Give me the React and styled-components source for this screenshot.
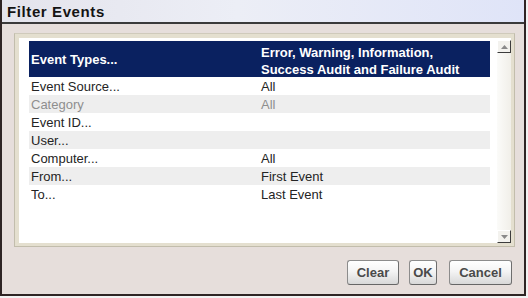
import React from 'react';
import styled, { createGlobalStyle } from 'styled-components';

const GlobalStyle = createGlobalStyle`
  html, body {
    margin: 0;
    padding: 0;
    background: #f2f2f2;
  }
  body {
    font-family: "Liberation Sans", Arial, sans-serif;
  }
`;

const rows = [
  { label: 'Event Source...', value: 'All' },
  { label: 'Category', value: 'All', disabled: true },
  { label: 'Event ID...', value: '' },
  { label: 'User...', value: '' },
  { label: 'Computer...', value: 'All' },
  { label: 'From...', value: 'First Event' },
  { label: 'To...', value: 'Last Event' },
];

const Dialog = styled.div`
  width: 526px;
  height: 296px;
  box-sizing: border-box;
  display: flex;
  flex-direction: column;
  background: #e6dedb;
  border-left: 2px solid #2e2424;
  border-right: 2px solid #2e2424;
  border-bottom: 2px solid #2e2424;
`;

const TitleBar = styled.div`
  height: 22px;
  line-height: 24px;
  padding-left: 5px;
  border-bottom: 2px solid #3a3a3a;
  background: linear-gradient(to right, #e4e4ec 0%, #eceef6 45%, #dfe4f8 100%);
  font-weight: bold;
  font-size: 15px;
  letter-spacing: 0.6px;
  color: #141414;
`;

const Body = styled.div`
  flex: 1;
  display: flex;
  flex-direction: column;
  padding: 9px 9px 0 12px;
`;

const Panel = styled.div`
  height: 214px;
  box-sizing: border-box;
  border: 1px solid #c2bdac;
  border-top-color: #cfcabb;
  background: #e4dfcf;
  padding: 4px 3px 3px 4px;
  display: flex;
`;

const Inner = styled.div`
  flex: 1;
  background: #ffffff;
  display: flex;
  padding: 3px 0 0 10px;
`;

const Table = styled.div`
  width: 461px;
  display: flex;
  flex-direction: column;
`;

const Row = styled.div`
  display: grid;
  grid-template-columns: 230px 1fr;
  height: 18px;
  line-height: 19px;
  font-size: 13px;
  color: ${p => (p.$muted ? '#8e8e8e' : '#242424')};
  background: ${p => (p.$shade ? '#eeeeee' : 'transparent')};
`;

const HeadRow = styled.div`
  display: grid;
  grid-template-columns: 230px 1fr;
  align-items: center;
  height: 36px;
  background: #0a2160;
  color: #ffffff;
  font-weight: bold;
  font-size: 13px;
  line-height: 17px;
`;

const Cell = styled.div`
  padding-left: 2px;
  padding-top: ${p => p.$top || 0}px;
  white-space: nowrap;
`;

const ScrollBar = styled.div`
  width: 14px;
  margin-left: 7px;
  margin-top: -1px;
  display: flex;
  flex-direction: column;
  justify-content: space-between;
  background: linear-gradient(to right, #fbfbf9, #f1efe9);
`;

const ScrollButton = styled.div`
  width: 14px;
  height: 13px;
  box-sizing: border-box;
  background: #f3f2ee;
  border-top: 1px solid #ffffff;
  border-left: 1px solid #ffffff;
  border-right: 1px solid #3c3c3c;
  border-bottom: 1px solid #3c3c3c;
  display: flex;
  align-items: center;
  justify-content: center;
`;

const Footer = styled.div`
  display: flex;
  justify-content: flex-end;
  gap: 10px;
  margin-top: 13px;
  padding-right: 3px;
`;

const Button = styled.button`
  width: ${p => p.$w}px;
  height: 25px;
  padding: 0;
  border: 1px solid #8c8c8c;
  border-right-color: #6e6e6e;
  border-bottom-color: #666666;
  border-radius: 3px;
  background: linear-gradient(#ffffff 0%, #f4f4f4 45%, #d8d8d8 100%);
  font-family: "Liberation Sans", Arial, sans-serif;
  font-weight: bold;
  font-size: 13px;
  color: #4a4a4a;
  margin-left: ${p => p.$ml || 0}px;
`;

const Arrow = ({ up }) => (
  <svg width="7" height="4" viewBox="0 0 7 4">
    <path d={up ? 'M0 4 L3.5 0 L7 4 Z' : 'M0 0 L3.5 4 L7 0 Z'} fill="#8a8a8a" />
  </svg>
);

const App = () => {
  return (
    <>
      <GlobalStyle />
      <Dialog>
        <TitleBar>Filter Events</TitleBar>
        <Body>
          <Panel>
            <Inner>
              <Table>
                <HeadRow>
                  <Cell>Event Types...</Cell>
                  <Cell $top={3}>
                    Error, Warning, Information,
                    <br />
                    Success Audit and Failure Audit
                  </Cell>
                </HeadRow>
                {rows.map((r, i) => (
                  <Row key={r.label} $shade={i % 2 === 1} $muted={r.disabled}>
                    <Cell>{r.label}</Cell>
                    <Cell>{r.value}</Cell>
                  </Row>
                ))}
              </Table>
              <ScrollBar>
                <ScrollButton><Arrow up /></ScrollButton>
                <ScrollButton><Arrow /></ScrollButton>
              </ScrollBar>
            </Inner>
          </Panel>
          <Footer>
            <Button $w={52}>Clear</Button>
            <Button $w={28}>OK</Button>
            <Button $w={63} $ml={2}>Cancel</Button>
          </Footer>
        </Body>
      </Dialog>
    </>
  );
};

export default App;
